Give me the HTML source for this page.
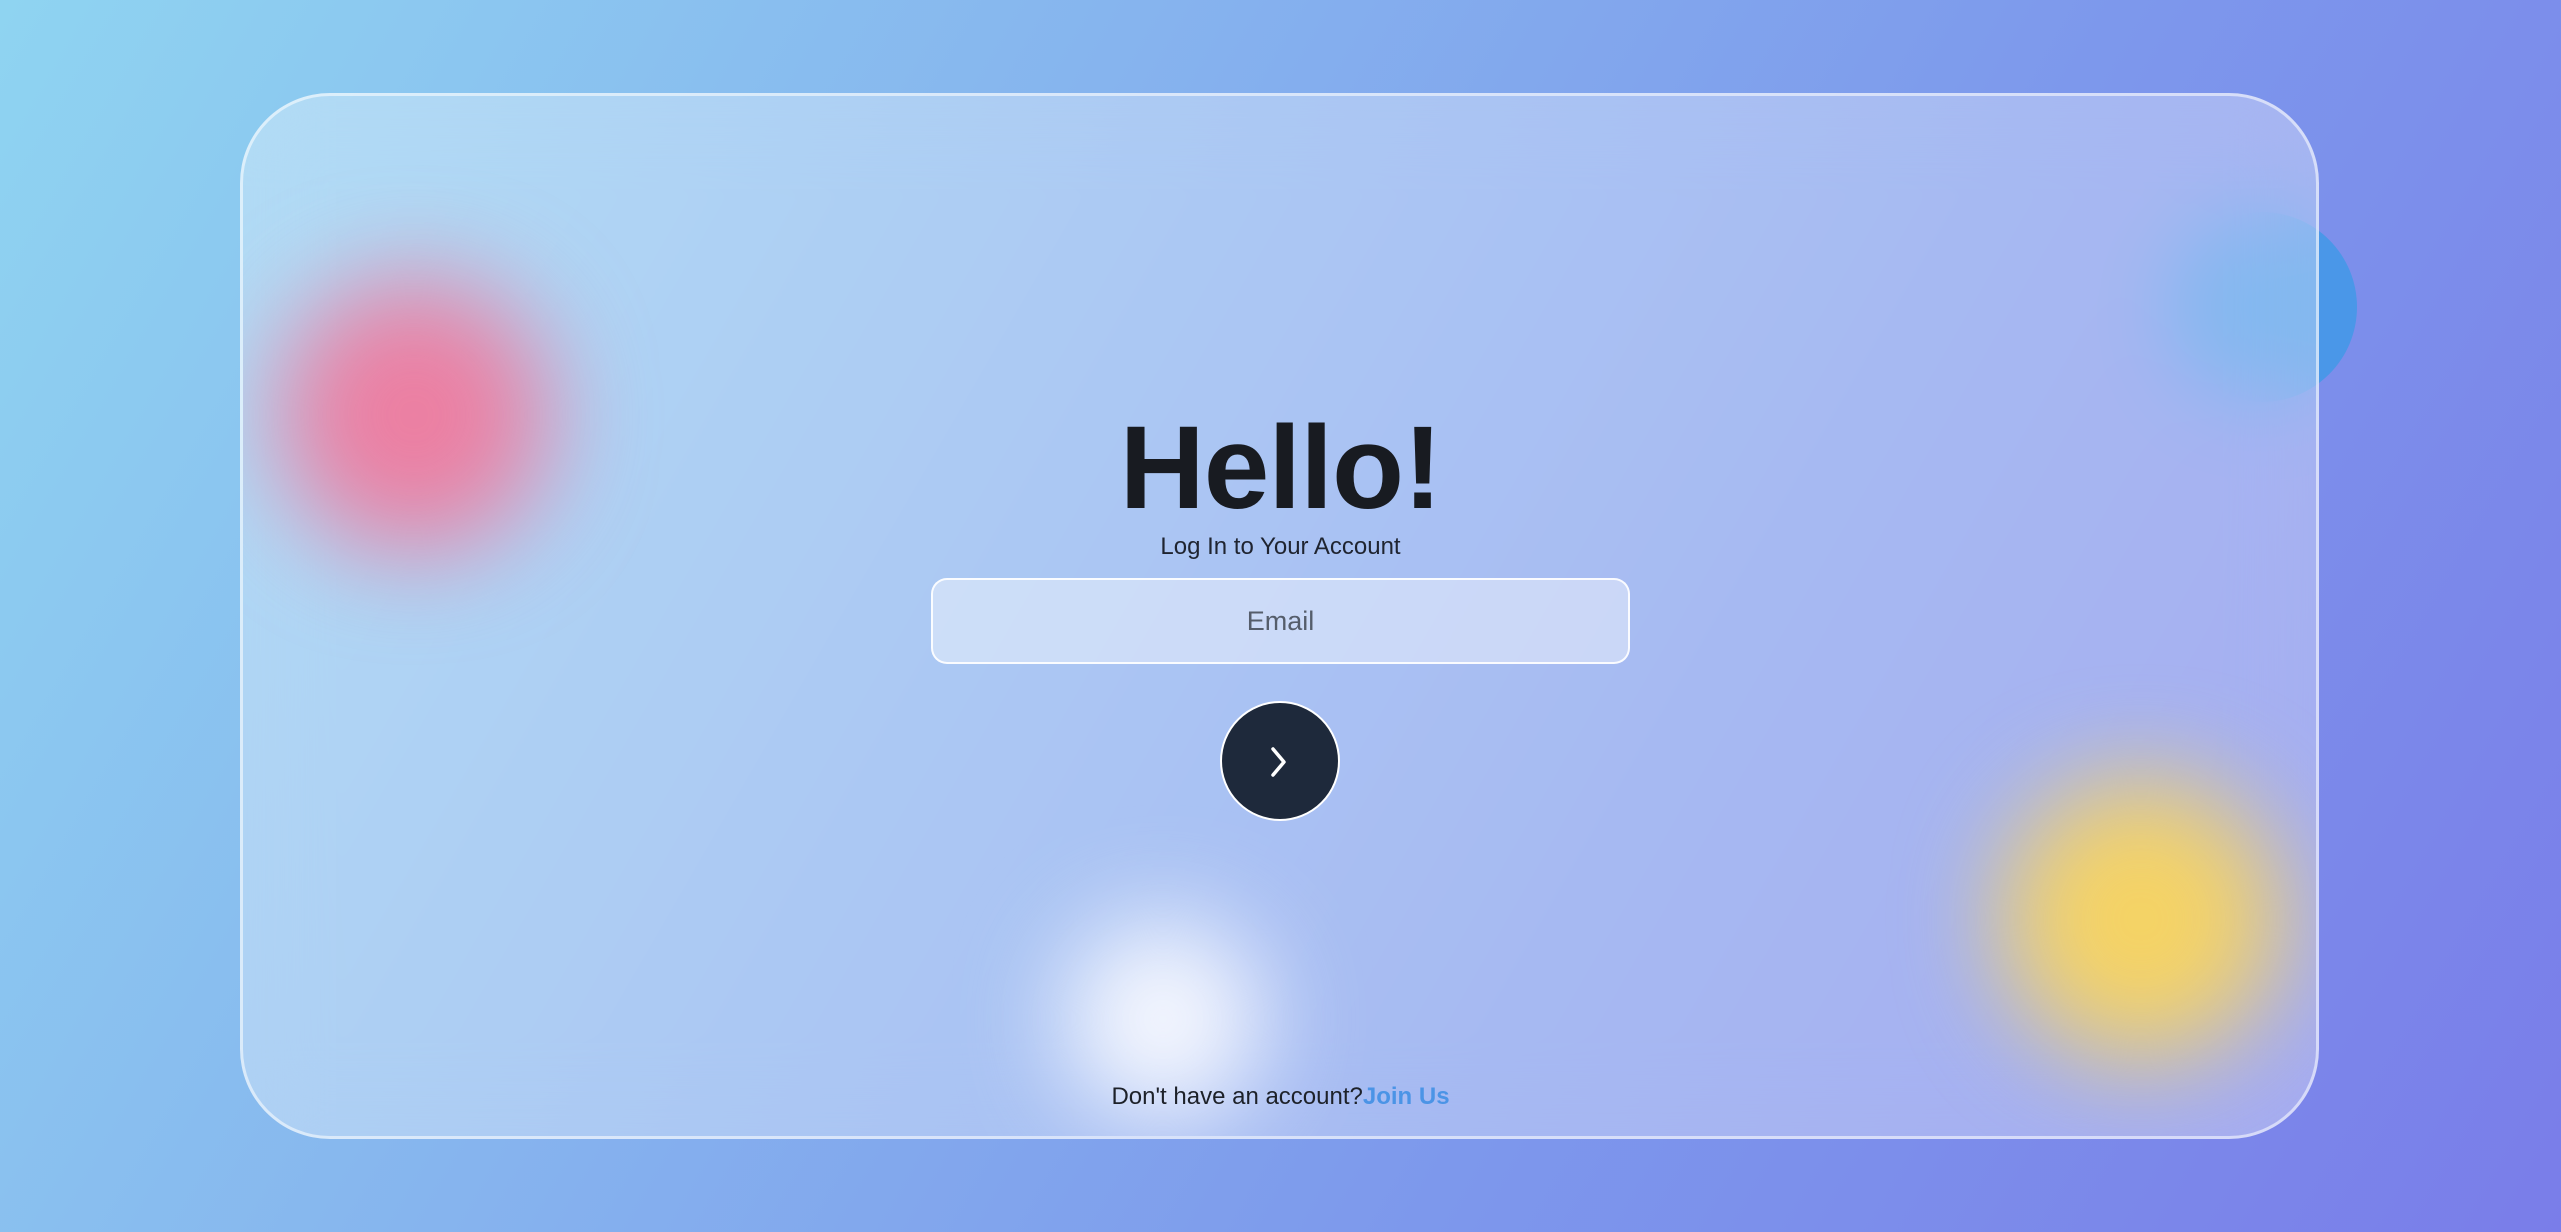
<!DOCTYPE html>
<html><head><meta charset="utf-8"><style>
html,body{margin:0;padding:0}
body{width:2561px;height:1232px;overflow:hidden;position:relative;background:linear-gradient(120deg,#8fd4f1 0%,#86b4ee 35%,#7d98ec 65%,#7a7de9 100%);font-family:"Liberation Sans",sans-serif}
.bc{position:absolute;left:2167px;top:212px;width:190px;height:190px;border-radius:50%;background:#4a97e8}
.card{position:absolute;left:240px;top:93px;width:2079px;height:1046px;box-sizing:border-box;border:3px solid rgba(255,255,255,.55);border-radius:90px;background:rgba(255,255,255,.32);backdrop-filter:blur(40px);-webkit-backdrop-filter:blur(40px);overflow:hidden}
.b{position:absolute;border-radius:50%;filter:blur(50px)}
.t{position:absolute;left:0;width:100%;text-align:center}
</style></head><body>
<div class="bc"></div>
<div class="card">
 <div class="b" style="left:36px;top:184px;width:270px;height:270px;background:#ec7fa2"></div>
 <div class="b" style="left:1758px;top:683px;width:280px;height:280px;background:#f5d365"></div>
 <div class="b" style="left:820px;top:823px;width:200px;height:200px;background:#f6f8fe"></div>
</div>
<div class="t" style="top:398px;font-size:118px;font-weight:bold;color:#181b21;letter-spacing:-1px;line-height:140px">Hello!</div>
<div class="t" style="top:532px;font-size:24px;color:#1f2430;line-height:30px">Log In to Your Account</div>
<div style="position:absolute;left:931px;top:578px;width:699px;height:86px;box-sizing:border-box;border:2px solid rgba(255,255,255,.9);border-radius:16px;background:rgba(255,255,255,.4);text-align:center;line-height:82px;font-size:27px;color:#555d6b">Email</div>
<div style="position:absolute;left:1220px;top:701px;width:120px;height:120px;box-sizing:border-box;border:2px solid #fff;border-radius:50%;background:#1e293b">
<svg width="116" height="116" viewBox="0 0 116 116" style="position:absolute;left:0;top:0"><path d="M51 46 L62 59 L51 72" fill="none" stroke="#fff" stroke-width="3.5" stroke-linecap="round" stroke-linejoin="round"/></svg></div>
<div class="t" style="top:1082px;font-size:24px;line-height:30px;color:#1d2129">Don't have an account?<span style="color:#4b94e6;font-weight:bold">Join Us</span></div>
</body></html>
